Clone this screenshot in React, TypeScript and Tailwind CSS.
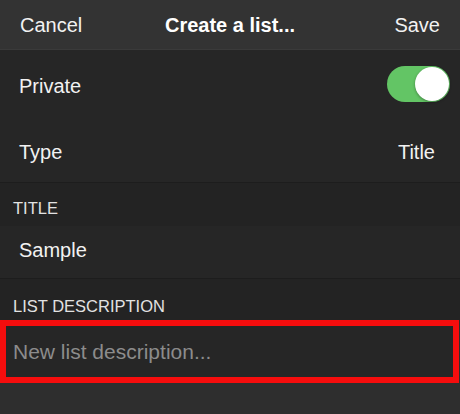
import { useState } from 'react'

// =============================================================
//  Linhas da lista
// =============================================================

function Row({ label, children, className = '' }: { label: string; children?: React.ReactNode; className?: string }) {
  return (
    <div className={`flex items-center justify-between pl-[19px] pr-[25px] bg-[#262626] ${className}`}>
      <span className="text-[20px] text-[#f2f2f2]">{label}</span>
      {children}
    </div>
  )
}

function SectionHeader({ label, className = '' }: { label: string; className?: string }) {
  return (
    <div className={`flex items-end pl-[13px] bg-[#232323] ${className}`}>
      <span className="text-[16.5px] text-[#e2e2e2] uppercase leading-none">{label}</span>
    </div>
  )
}

// =============================================================
//  App
// =============================================================

export default function App() {
  const [priv, setPriv] = useState(true)

  return (
    <div className="w-[460px] h-[414px] bg-[#2e2e2e] font-['Liberation_Sans',Arial,sans-serif] overflow-hidden">
      {/* Header */}
      <div className="h-[50px] bg-[#333333] border-b border-[#3a3a3a] grid grid-cols-[1fr_auto_1fr] items-center px-[20px]">
        <span className="text-[20px] text-[#f2f2f2]">Cancel</span>
        <span className="text-[20px] font-bold text-white">Create a list...</span>
        <span className="text-[20px] text-[#f2f2f2] text-right">Save</span>
      </div>

      {/* Private */}
      <Row label="Private" className="h-[68px] pt-[3px] !pr-[10px]">
        <button
          onClick={() => setPriv(!priv)}
          className={`relative -mt-[3px] w-[63px] h-[36px] rounded-full transition-colors ${priv ? 'bg-[#63c565]' : 'bg-[#555]'}`}
        >
          <span
            className={`absolute top-[1px] w-[34px] h-[34px] rounded-full bg-white shadow-[0_1px_3px_rgba(0,0,0,0.35)] transition-all ${priv ? 'left-[28px]' : 'left-[1px]'}`}
          />
        </button>
      </Row>

      {/* Type */}
      <Row label="Type" className="h-[65px] pt-[3px] border-b border-[#1d1d1d]">
        <span className="text-[20px] text-[#f2f2f2]">Title</span>
      </Row>

      <SectionHeader label="Title" className="h-[43px] pb-[10px]" />

      <Row label="Sample" className="h-[53px] pb-[4px] border-b border-[#1d1d1d]" />

      <SectionHeader label="List Description" className="h-[41px] pb-[6px]" />

      {/* Descrição */}
      <div className="h-[63px] w-[459px] border-[6px] border-[#f50d0d] bg-[#262626] flex items-center pl-[7px]">
        <span className="text-[21px] text-[#8c8c8c]">New list description...</span>
      </div>
    </div>
  )
}
